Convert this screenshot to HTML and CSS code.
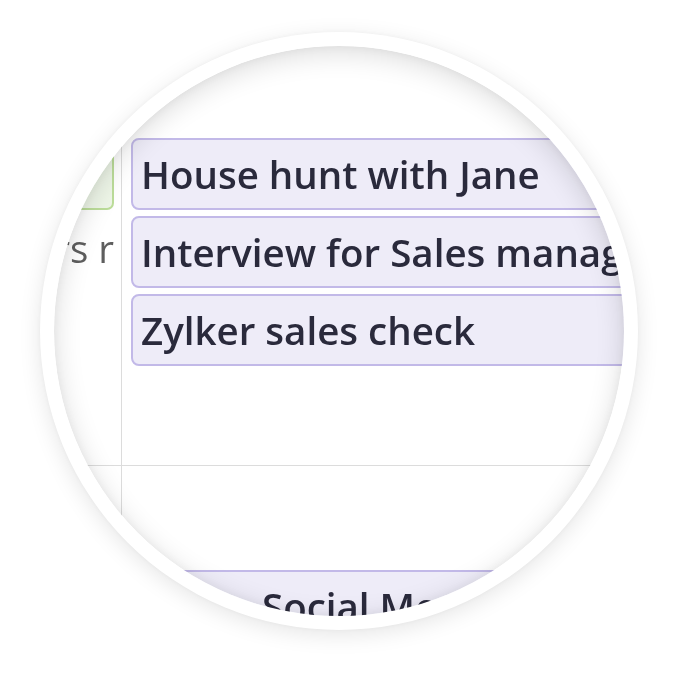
FILE: index.html
```html
<!DOCTYPE html>
<html lang="en">
<head>
<meta charset="utf-8">
<title>Calendar lens</title>
<link rel="stylesheet" href="styles.css">
</head>
<body>
<div class="stage">
  <div class="lens">
    <div class="glass">
      <div class="cal">
        <div class="row row-top">
          <div class="side">
            <div class="evt-green"></div>
            <div class="more">rs r</div>
          </div>
          <div class="day">
            <div class="evt"><span>House hunt with Jane</span></div>
            <div class="evt"><span>Interview for Sales manager</span></div>
            <div class="evt"><span>Zylker sales check</span></div>
          </div>
        </div>
        <div class="row row-bottom">
          <div class="side"></div>
          <div class="day day-bottom">
            <div class="evt evt-wide"><span>Social Media Campaign</span></div>
          </div>
        </div>
      </div>
    </div>
  </div>
</div>
</body>
</html>
```

FILE: styles.css
```css
* { box-sizing: border-box; }
html, body { margin: 0; padding: 0; background: #ffffff; }
body { width: 678px; height: 681px; overflow: hidden; font-family: "Open Sans", "Noto Sans", sans-serif; }

.stage { padding: 32px 0 0 40px; }

.lens {
  width: 598px;
  height: 598px;
  border-radius: 50%;
  background: #ffffff;
  padding: 14px;
  box-shadow: 0 5px 22px rgba(0, 0, 0, 0.10), 0 0 4px rgba(0, 0, 0, 0.04);
}

.glass {
  position: relative;
  width: 570px;
  height: 570px;
  border-radius: 50%;
  overflow: hidden;
  background: #ffffff;
}
.glass::after {
  content: "";
  position: absolute;
  inset: 0;
  border-radius: 50%;
  box-shadow: inset 0 6px 28px rgba(0, 0, 0, 0.14), inset 0 0 10px rgba(0, 0, 0, 0.05);
  pointer-events: none;
}

.cal { width: 900px; filter: blur(0.3px); }

.row { display: grid; grid-template-columns: 67px 1fr; }
.row-top { height: 420px; border-bottom: 1px solid #dcdcdc; }
.row-bottom { height: 200px; }

.side { padding-top: 92px; }
.day { border-left: 1px solid #dcdcdc; padding: 92px 0 0 9px; display: flex; flex-direction: column; gap: 6px; }
.day-bottom { padding-top: 104px; }

.evt-green {
  height: 72px;
  width: 60px;
  border: 2px solid #bcdd9a;
  border-left: none;
  border-radius: 0 7px 7px 0;
  background: #eef6e8;
}
.more {
  margin-top: 6px;
  width: 60px;
  text-align: right;
  white-space: nowrap;
  overflow: hidden;
  direction: rtl;
  font-size: 38.5px;
  line-height: 64px;
  color: #5e5e5e;
}

.evt {
  height: 72px;
  border: 2px solid #c2b9e8;
  border-radius: 8px;
  background: #eeecf8;
  padding-left: 8px;
  display: flex;
  align-items: center;
  white-space: nowrap;
  font-size: 38.5px;
  font-weight: 600;
  color: #2a2a3c;
}
.evt-wide { margin-left: -80px; padding-left: 209px; }
```
